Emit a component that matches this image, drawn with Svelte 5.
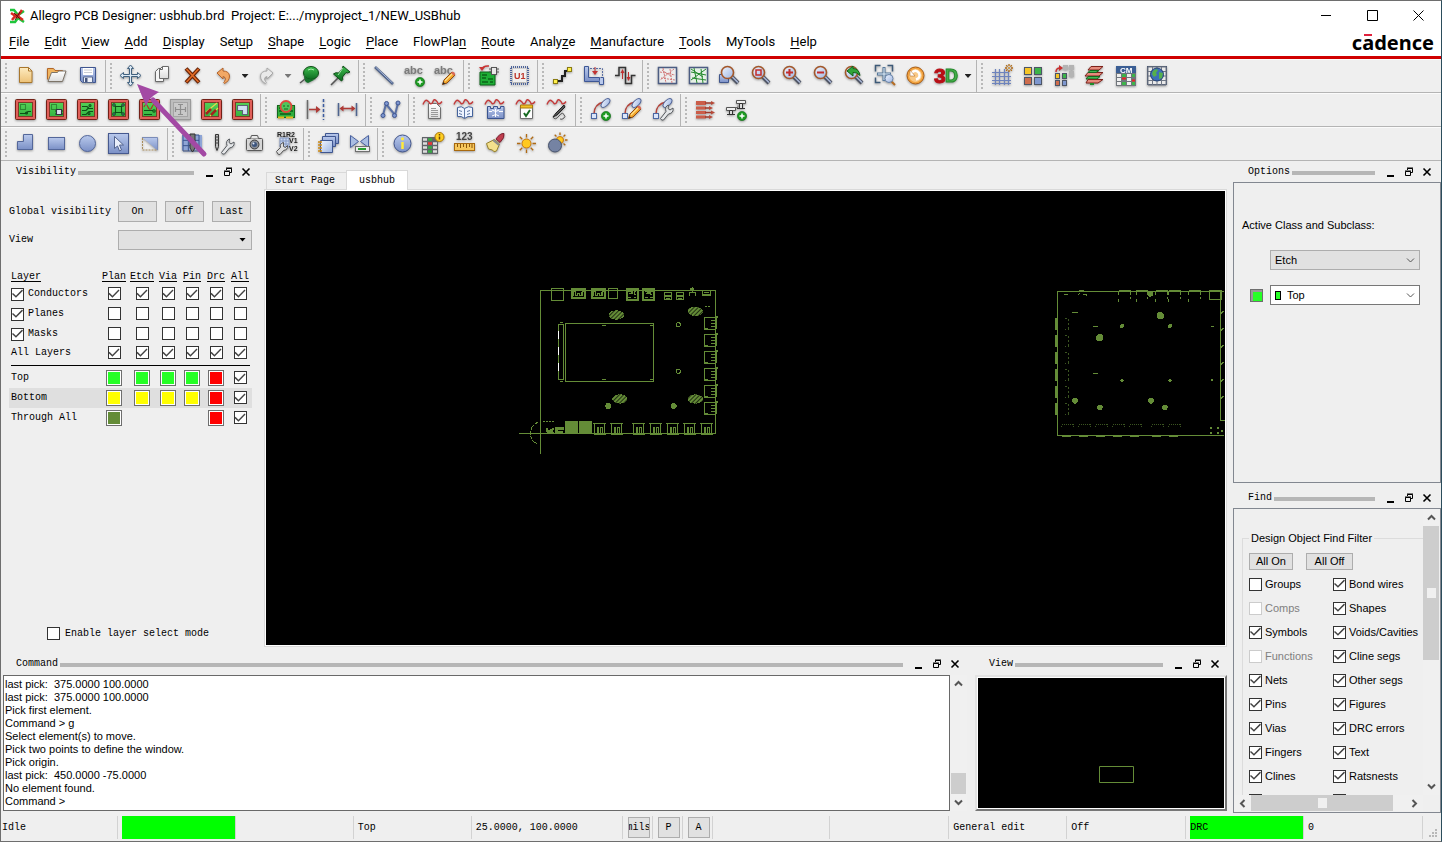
<script lang="ts">
	type Tool = { icon: string; label: string; arrow?: 'on' | 'off' };

	const menus = [
		['', 'F', 'ile'], ['', 'E', 'dit'], ['', 'V', 'iew'], ['', 'A', 'dd'], ['', 'D', 'isplay'],
		['Set', 'u', 'p'], ['', 'S', 'hape'], ['', 'L', 'ogic'], ['', 'P', 'lace'], ['FlowPla', 'n', ''],
		['', 'R', 'oute'], ['Analy', 'z', 'e'], ['', 'M', 'anufacture'], ['', 'T', 'ools'], ['MyTools', '', ''], ['', 'H', 'elp'],
	];

	const badge = '<circle cx="18" cy="19" r="4.6" fill="#1d9a22" stroke="#0c6b12" stroke-width=".6"/><path d="M15.500 19h5M18 16.500v5" stroke="#fff" stroke-width="1.5"/>';
	const pencil = '<path d="M9.500 21.500l1.500-4.500 8-8 3 3-8 8z" fill="#f3a72c" stroke="#8d4a12"/><path d="M12 18l8-8" stroke="#ffe08a" stroke-width="1.200"/><path d="M18 10l1.500-1.500q2 0 2.800 2.800L21 12.700z" fill="#d96a58"/><path d="M9.500 21.500l.8-2.600 1.800 1.800z" fill="#222"/>';
	const wave = '<path d="M2 7.500q2-5 4-4t3 3q2 1 3-2t3-1 2 3q2 1 4-2" fill="none" stroke="#c43b3b" stroke-width="1.400"/>';
	const wrench = '<path d="M10.500 21.500l5.500-7q-1.500-5 2.500-6.500l-.5 3.500 2 1.500 3-2q1 5-4.500 6l-5 6q-2 1-3-1.500z" fill="#e4e6e8" stroke="#55595e"/>';
	const sun = (x: number, y: number, r: number, reach = 5) => {
		let rays = '';
		for (let i = 0; i < 8; i++) {
			const c = Math.cos((i * Math.PI) / 4);
			const s = Math.sin((i * Math.PI) / 4);
			rays += `M${x + c * (r + 1.5)} ${y + s * (r + 1.5)}L${x + c * (r + reach)} ${y + s * (r + reach)}`;
		}
		return `<path d="${rays}" stroke="#b06a14" stroke-width="1.300"/><circle cx="${x}" cy="${y}" r="${r}" fill="#ffc91f" stroke="#c8780f"/>`;
	};
	const board = (inner: string) =>
		`<rect x="2.500" y="2.500" width="20" height="20" rx="1" fill="url(#green)" stroke="#742018"/><rect x="4" y="4" width="17" height="17" fill="none" stroke="#e0605a" stroke-width="2"/><rect x="5.500" y="5.500" width="14" height="14" fill="none" stroke="#7d3a26"/><g fill="none" stroke="#0e4f17" stroke-width="1.100">${inner}</g>`;
	const lens = (inner: string) =>
		`<path d="M14 13l7 7" stroke="#4d5363" stroke-width="4"/><path d="M14.500 13l6.500 6.500" stroke="#a9b7d6" stroke-width="1.500"/><circle cx="10.500" cy="9.500" r="6" fill="url(#glass)" stroke="#a3572a" stroke-width="1.600"/>${inner}`;
	const net = (inner: string) =>
		`<path d="M6 17q0-10 10-12" fill="none" stroke="#b4433b" stroke-width="1.500"/><rect x="3.500" y="16.500" width="5" height="5" fill="#dbe6fa" stroke="#4c68a4"/><ellipse cx="17.500" cy="6" rx="5.500" ry="2.800" transform="rotate(-45 17.500 6)" fill="url(#glass)" stroke="#51659a"/>${inner}`;
	const grid = (x: number, y: number, s: number, n: number, c: string) => {
		let d = '';
		for (let i = 0; i <= n; i++) d += `M${x + (s / n) * i} ${y}v${s}M${x} ${y + (s / n) * i}h${s}`;
		return `<path d="${d}" fill="none" stroke="${c}"/>`;
	};

	const icons: Record<string, string> = {
		new: '<path d="M6.500 4.500h9l3.500 3.500v11.500H6.500z" fill="url(#gold)" stroke="#a9772d"/><path d="M15.500 4.500v3.500H19z" fill="#fff3d4" stroke="#a9772d"/>',
		open: '<path d="M3.500 16.500v-11h6l1.500 2h7.500v4" fill="#f0b560" stroke="#b3672a"/><path d="M4 18.500l3.500-9h6l1-1.500h7.500l-3.500 10.500z" fill="url(#paper)" stroke="#7d7468"/>',
		save: '<path d="M5.500 4.500h15v15h-13l-2-2z" fill="url(#blue)" stroke="#3f5590"/><path d="M8 5h10v7H8z" fill="#fff"/><path d="M9 7h8M9 9.500h8" stroke="#c9ccd4"/><path d="M8.500 14h9v5.500h-9z" fill="#eef1f8" stroke="#55678f"/><path d="M10 15h2.500v4H10z" fill="#45557e"/>',
		move: '<path d="M12.500 2l3 3.500h-2v6h6v-2L23 12.500l-3.500 3v-2h-6v6h2l-3 3.500-3-3.500h2v-6h-6v2L2 12.500l3.500-3v2h6v-6h-2z" fill="#dce9f5" stroke="#41617e"/>',
		copy: '<path d="M6.500 8.500l3-3h5v13h-8z" fill="#f5f5f5" stroke="#6a6a6a"/><path d="M10.500 6.500l3-3h6v12h-9z" fill="url(#paper)" stroke="#6a6a6a"/><path d="M13.500 3.500v3h-3" fill="none" stroke="#6a6a6a"/>',
		delete: '<path d="M6 5.500l13 14M19 5.500l-13 14" stroke="#6b2508" stroke-width="4"/><path d="M6.500 6l12 13M18.500 6l-12 13" stroke="#e36c27" stroke-width="1.600"/>',
		undo: '<path d="M6 10l6-5v3q6 0 6.500 5 0 5-5 7.500-1.500-1 0-2 2-2.500 0-4.500-1-.5-1.500-.5V16z" fill="#f2a865" stroke="#b4632a"/>',
		redo: '<path d="M19 10l-6-5v3q-6 0-6.500 5 0 5 5 7.500 1.500-1 0-2-2-2.500 0-4.500 1-.5 1.500-.5V16z" fill="#e9e9e9" stroke="#a8a8a8"/>',
		unfix: '<ellipse cx="14" cy="10" rx="7.500" ry="6.500" fill="url(#pin)" stroke="#0d4d15"/><path d="M7 13q5 5 12 3l-8 4q-4-1-4-7z" fill="#15702a"/><path d="M8 16l-5 4" stroke="#555" stroke-width="1.500"/><path d="M11 7q3-2 6 0" stroke="#a6ecab" fill="none"/>',
		fix: '<path d="M10 15l-7 7" stroke="#555" stroke-width="1.600"/><path d="M15 3l7 6-2.500 1-1.500-.5-3.500 4.500q1 3-1 4l-8-7q2-2 5-1l4-4z" fill="url(#pin)" stroke="#0d4d15"/><path d="M15 5l-5 7" stroke="#9fe6a4"/>',
		line: '<path d="M4 4l18 17" stroke="#4d6188" stroke-width="2.600"/><path d="M4.500 4l17 16" stroke="#a9b9db"/>',
		text: '<text x="2" y="11" font-size="11" font-weight="700" fill="#7b7b7b">abc</text>' + badge,
		textedit: '<text x="1" y="11" font-size="11" font-weight="700" fill="#7b7b7b">abc</text>' + pencil,
		place: '<path d="M4 9h12l3 3v10H4z" fill="#1fae36" stroke="#0b6419"/><path d="M6 12h5M6 15h4M12 16h5M6 19h6M14 19h3" stroke="#0b6419" stroke-width="1.500"/><rect x="15.500" y="4.500" width="5" height="7" fill="#e8e8e8" stroke="#555"/><path d="M13 6h2M13 9h2M21 6h2M21 9h2" stroke="#555"/><path d="M6 6q1-3.500 7-3" fill="none" stroke="#c83434" stroke-width="1.500"/><path d="M3 4l3 4 3-4z" fill="#c83434"/>',
		chip: '<rect x="4" y="4" width="17" height="17" fill="none" stroke="#4c639b" stroke-width="2" stroke-dasharray="1 1"/><rect x="6" y="6" width="13" height="13" fill="#f0f0f0"/><text x="7" y="16" font-size="9" font-weight="700" fill="#bd3428">U1</text>',
		route: '<path d="M7 18h5v-5h3V8h4" fill="none" stroke="#222" stroke-width="2"/><rect x="3.500" y="16.500" width="4" height="4" fill="#fff04c" stroke="#8a7b13"/><rect x="17.500" y="4.500" width="4" height="4" fill="#fff04c" stroke="#8a7b13"/>',
		slide: '<path d="M3.500 3.500v15h15v-4h-11v-11z" fill="url(#blue)" stroke="#3d5796"/><path d="M9 5.500h12.500v9" fill="none" stroke="#5a6ea3" stroke-dasharray="2 1"/><path d="M19.500 14.500h3v7h-4v-3" fill="#b9c9ec" stroke="#3d5796"/><path d="M14 4v7" stroke="#c23232"/><path d="M11 8l3 4 3-4z" fill="#c23232"/>',
		delay: '<path d="M3 12.500h4v-8h6.500v16h6v-8h4" fill="none" stroke="#333" stroke-width="1.500"/><path d="M10.500 16V8M16.500 9v8" stroke="#c03030"/><path d="M8.500 10l2-4 2 4zM14.500 14l2 4 2-4z" fill="#c03030"/>',
		unrats: '<rect x="3.500" y="4.500" width="18" height="16" fill="#ededed" stroke="#4c5d83" stroke-width="1.500"/><path d="M5 9l15 3M8 5l3 15M19 6l-14 11M15 6l2 14M6 15l14 2M7 7l10 7" stroke="#d27777" stroke-dasharray="2 1"/>',
		rats: '<rect x="3.500" y="4.500" width="18" height="16" fill="#e6f0e6" stroke="#4c5d83" stroke-width="1.500"/><path d="M5 9l15 3M8 5l3 15M20 6l-15 11M15 6l2 14M6 15l14 2M5 6l12 8" stroke="#258a2e"/>',
		zoompoints: '<path d="M2.500 11.500h9v8h-9z" fill="url(#blue)" stroke="#40568c"/>' + lens(''),
		zoomfit: lens('<path d="M8 7h5v5H8z" fill="none" stroke="#c32d2d" stroke-width="1.500"/>'),
		zoomin: lens('<path d="M7 9.500h7M10.500 6v7" stroke="#c32d2d" stroke-width="2"/>'),
		zoomout: lens('<path d="M7 9.500h7" stroke="#c32d2d" stroke-width="2"/>'),
		zoomprev: lens('<path d="M6 8l6-5v2.500q6 0 7 7-3-3.500-7-3V13z" fill="#31a53a" stroke="#126119"/>'),
		zoomsel: '<path d="M3.500 8.500v-6h5M15.500 2.500h5v6M3.500 14.500v5h5" fill="none" stroke="#3d5a78" stroke-width="1.500"/><path d="M12 4v14M5 11h14" stroke="#56799b" stroke-width="3"/><path d="M12 5v12M6 11h12" stroke="#e5f0fa"/><path d="M19 18l4 4" stroke="#b56b22" stroke-width="2"/><circle cx="17" cy="15.500" r="4" fill="url(#glass)" stroke="#6883a8"/>',
		refresh: '<circle cx="12.500" cy="12.500" r="8.500" fill="#f2a23d" stroke="#a85d16"/><circle cx="12.500" cy="12.500" r="6.500" fill="#f9c987"/><path d="M8.500 10q4-4.500 7.500 0 2 5-3 6.500" fill="none" stroke="#fff" stroke-width="2.500"/><path d="M7 7v6h5z" fill="#fff" stroke="#a85d16" stroke-width=".5"/>',
		three: '<text x="0" y="20" font-size="21" font-weight="900" fill="#b80f16" stroke="#b80f16">3</text><text x="11" y="19" font-size="18" font-weight="900" fill="#45ae4b" stroke="#258b2c">D</text>',
		grid: '<path d="M6.500 6v16M10.500 6v16M15.500 6v16M19.500 8v14M3 9.500h17M3 13.500h19M3 17.500h19M3 20.500h19" stroke="#6d83bd" stroke-width="1.200" fill="none"/>' + sun(20, 5, 0.5, 3.5),
		color: '<rect x="4.500" y="4.500" width="7" height="7" fill="#f6c526" stroke="#4d5566"/><rect x="14.500" y="4.500" width="7" height="7" fill="#3db44a" stroke="#4d5566"/><rect x="4.500" y="14.500" width="7" height="7" fill="#cf6d4d" stroke="#4d5566"/><rect x="14.500" y="14.500" width="7" height="7" fill="#7e97cf" stroke="#4d5566"/>',
		colorswap: '<path d="M12 2h5v5h-5zM18 2h5v5h-5zM18 8h5v6h-5z" fill="#b4b4b4"/><rect x="4.500" y="10.500" width="4" height="5" fill="#f6c526" stroke="#4d5566"/><rect x="11.500" y="10.500" width="4" height="5" fill="#3db44a" stroke="#4d5566"/><rect x="4.500" y="17.500" width="4" height="5" fill="#cf6d4d" stroke="#4d5566"/><rect x="11.500" y="17.500" width="4" height="5" fill="#7e97cf" stroke="#4d5566"/><path d="M5 9q0-4 4-4" fill="none" stroke="#c83030" stroke-width="1.500"/><path d="M8 2l4 3-4 3z" fill="#c83030"/>',
		stack: '<path d="M9 3.500h12l-4 3.500H6zM6 9.500h15l-4 3.500H3z" fill="#e58a7c" stroke="#7d221b"/><path d="M8 7.500h9l-3 2H6zM6 13.500h12l-3 2.500H4z" fill="#42b651" stroke="#17641f"/><path d="M6 16.500h15l-5 3.500H4z" fill="#e58a7c" stroke="#7d221b"/><path d="M8 20h4v2H8z" fill="#1d8c2c"/>',
		cm: '<rect x="3" y="3" width="20" height="20" fill="#70757b"/><rect x="3" y="3" width="20" height="7" fill="#3b5e94"/><text x="7" y="9.500" font-size="8" font-weight="700" fill="#fff">CM</text><path d="M4 12.500h4M4 16.500h4M4 20.500h4M14 12.500h4M14 16.500h4M14 20.500h4" stroke="#eee" stroke-width="3"/><path d="M9 12.500h4M9 20.500h4M19 12.500h3M19 20.500h3" stroke="#3db44a" stroke-width="3"/><path d="M9 15.500h4M19 17.500h3" stroke="#ea2424" stroke-width="2"/>',
		world: '<rect x="3.500" y="3.500" width="19" height="18" fill="#e9e9e9" stroke="#4c5870"/>' + grid(4, 4, 18, 4, '#6f7785') + '<circle cx="13" cy="11.500" r="6.500" fill="#3c6fb8" stroke="#23406f"/><path d="M9 8q3-3 5-1l-2 3 1 2-3 2-2-3zM15 9l4 1-1 5-3 1z" fill="#56b04c"/>',

		b1: board('<path d="M7.500 7.500h5v5h-5z" stroke-dasharray="1 1"/><path d="M7 16.500h6l2-2h3"/><circle cx="13.500" cy="16" r="1"/>'),
		b2: board('<path d="M7.500 7.500h5v5h-5z" stroke-dasharray="1 1"/><path d="M12.500 12.500h5v5h-5z" fill="#dce0ee" stroke="#334"/><path d="M11 14h1M11 17h1M18 14h1M18 17h1"/>'),
		b3: board('<path d="M7 9.500h5l2 2h4M7 13.500h4l3-3M7 17.500h4l3-3h4"/><circle cx="15" cy="8.500" r="1"/><circle cx="14" cy="16.500" r="1"/>'),
		b4: board('<path d="M9.500 9.500h6v6h-6zM7 7l3 3M18 7l-3 3M7 18l3-3M18 18l-3-3"/><circle cx="8" cy="8" r="1.200" fill="#6b8fbd"/><circle cx="17" cy="8" r="1.200" fill="#6b8fbd"/><circle cx="8" cy="17" r="1.200" fill="#6b8fbd"/><circle cx="17" cy="17" r="1.200" fill="#6b8fbd"/>'),
		b5: board('<path d="M7 10q2-5 4 0t4 0 4 0" stroke="#b42a22"/><path d="M7 13.500h9M7 17.500h8"/><circle cx="17" cy="14" r="1.200"/>'),
		b6: '<rect x="2.500" y="2.500" width="20" height="20" fill="#bdbdbd" stroke="#9a9a9a"/><rect x="5.500" y="5.500" width="14" height="14" fill="#c9c9c9" stroke="#a5a5a5"/><path d="M12.500 7v11M8 12.500h9M10 7.500h5M10 17.500h5M7.500 10v5M17.500 10v5" stroke="#8e8e8e" stroke-width="1.200"/>',
		b7: board('<path d="M7 15l11-9M11 19l8-8" stroke="#e6d84a"/><path d="M7 17l5-5M12 18l5-5" stroke="#a2251c" stroke-width="2.600"/>'),
		b8: board('<path d="M7.500 8.500h10v9h-5v-4h-5z" fill="#cfe0f2" stroke="#5b6577"/>'),
		inspect: '<rect x="4.500" y="8.500" width="17" height="12" fill="#2fae3d" stroke="#126a1d"/><path d="M6 11h2M6 14h3M17 14h3M17 11h2M7 17h11" stroke="#0f5c19" stroke-width="1.500"/><path d="M5 20.500h6M13 20.500h7" stroke="#e4b71c" stroke-width="2"/><circle cx="13" cy="9.500" r="5.500" fill="#53c45c" stroke="#e2483d" stroke-width="1.800"/><path d="M10 9h2M14 9h2M11 12h4" stroke="#126a1d"/>',
		toline: '<path d="M3.500 3v19" stroke="#6a6a6a" stroke-width="1.500"/><path d="M19.500 2v21" stroke="#3c5ca0" stroke-width="1.500" stroke-dasharray="3 2"/><path d="M5 12.500h8" stroke="#b03a36" stroke-width="1.500"/><path d="M12 9l4.500 3.500L12 16z" fill="#b03a36"/>',
		dim: '<path d="M3.500 6v13M21.500 6v13" stroke="#4e648f" stroke-width="1.500"/><path d="M6 11.500h13" stroke="#b03a36" stroke-width="1.500"/><path d="M8.500 8.500L4.500 11.500l4 3zM16.500 8.500l4 3-4 3z" fill="#b03a36"/>',
		poly: '<path d="M5 18L8 7l9 11 3-12" fill="none" stroke="#5a70a4" stroke-width="2"/><g fill="#7d96cf" stroke="#3e5591"><circle cx="5" cy="18.500" r="2"/><circle cx="8.500" cy="6.500" r="2"/><circle cx="16.500" cy="18.500" r="2"/><circle cx="20" cy="6" r="2"/></g>',
		report: '<path d="M7.500 6.500h8l4 4v11h-12z" fill="url(#paper)" stroke="#6f6f6f"/><path d="M10 11.500h5M10 13.500h7M10 15.500h7M10 17.500h7M10 19.500h7" stroke="#9a9a9a"/>' + wave,
		book: '<path d="M5.500 10.500q4-2 7 1 4-3 8-1v9q-5-1-8 2-3-3-7-2z" fill="#eef4ff" stroke="#44639c"/><path d="M12.500 11.500v10M7 13.500l3 1M7 16.500l3 1M15 14.500l3-1M15 17.500l3-1" stroke="#5f78a6"/>' + wave,
		castle: '<path d="M4.500 9.500h3v2h3v-2h4v2h3v-2h3.500v12H4.500z" fill="url(#blue)" stroke="#3a548f"/><path d="M6 14.500h3M16 14.500h4M9 13q4 3 7 0M9 19q4-3 7 0M12.500 12v8" fill="none" stroke="#fff"/>' + wave,
		check: '<path d="M6.500 10.500h12v11h-12z" fill="#fff" stroke="#6f6f6f"/><path d="M6.500 8h12v3h-12z" fill="#f1c028" stroke="#a87a0c"/><path d="M10 16l2 3 4-6" fill="none" stroke="#176b22" stroke-width="2"/>' + wave,
		probe: '<path d="M19 8l-8 8-3 4 4-2 8-8z" fill="#555" stroke="#222"/><path d="M8 20q2 4 6-1t5-1q2 1 0 3t-4 1" fill="none" stroke="#555"/>' + wave,
		netadd: net(badge),
		netedit: net(pencil),
		nettool: net(wrench),
		align: '<path d="M3 4h10v4H3zM3 9.500h10v3H3zM3 14h10v3H3zM3 18.500h10v3H3z" fill="#cb5d49"/><path d="M12 6h7M12 11h5M12 15.500h7M12 20h5" stroke="#9c3a2b" stroke-width="1.500"/><path d="M18 4l4 2-4 2zM16 9l4 2-4 2zM18 13.500l4 2-4 2zM16 18l4 2-4 2z" fill="#b74a39"/>',
		pads: '<path d="M11 10.500h3v-2" fill="none" stroke="#666"/><path d="M12.500 3.500h9v3h-9zM2.500 10.500h9v3h-9z" fill="#eee" stroke="#555"/><path d="M15.500 6.500h3v5h-3zM5.500 13.500h3v4h-3z" fill="#ddd" stroke="#333"/><path d="M13 11.500h8M3 17.500h8" stroke="#333" stroke-width="1.200"/>' + badge,

		shape: '<path d="M10.500 3.500h9v15h-15v-8h6z" fill="url(#blue)" stroke="#54679a"/>',
		rect: '<rect x="4.500" y="6.500" width="16" height="12" fill="url(#blue)" stroke="#54679a"/>',
		circle: '<circle cx="12.500" cy="12.500" r="8" fill="url(#blue)" stroke="#54679a"/>',
		pick: '<rect x="2.500" y="2.500" width="20" height="20" fill="url(#blue)" stroke="#46598f"/><path d="M8.500 5.500v12l3-2.500 2 5 2-1-2-5h4z" fill="#e9eefa" stroke="#53648f"/>',
		cut: '<path d="M5 6.500h15.500v13L6 7" fill="url(#blue)"/><path d="M5 6.500h15.500v12.500" stroke="#7b8cb8" fill="none"/><path d="M5.500 7v12h14" fill="none" stroke="#a98c5a" stroke-dasharray="2 1"/>',
		gridtool: '<rect x="2" y="4" width="20" height="15" fill="#8ea5d6"/>' + grid(3, 4, 16, 3, '#3b558e') + '<path d="M10 3h5v14l-2.500 4-2.500-4z" fill="#777" stroke="#333"/>',
		drill: '<path d="M4.500 3.500h3v12l-1.500 4-1.500-4z" fill="#bbb" stroke="#333"/><path d="M4 6h4M4 9h4M4 12h4" stroke="#444"/>' + wrench,
		camera: '<rect x="4.500" y="7.500" width="16" height="12" rx="1" fill="#d6d6d6" stroke="#5a5a5a"/><path d="M8.500 7.500l1-3h6l1 3" fill="#e9e9e9" stroke="#5a5a5a"/><circle cx="12.500" cy="13.500" r="4.500" fill="#8b8f96" stroke="#3c3c3c"/><circle cx="12.500" cy="13.500" r="2.500" fill="#3e567e"/><circle cx="11.500" cy="12.500" r="1" fill="#dfe9f7"/>',
		refdes: '<rect x="7" y="7" width="9" height="10" fill="#c9d6ee"/>' + grid(7, 7, 9, 3, '#8499c4') + '<text x="4" y="6" font-size="7" font-weight="700" fill="#222">R1R2</text><text x="16" y="12" font-size="7" font-weight="700" fill="#222">V1</text><text x="16" y="20" font-size="7" font-weight="700" fill="#222">V2</text><path d="M3.500 20.500l4-4q-1-4 3-5v4l2 1 2-2q1 4-4 5l-3.500 4q-2 1-3.500-3z" fill="#dedede" stroke="#555"/>',
		cascade: '<path d="M9.500 2.500h13v10h-13z" fill="url(#blue)" stroke="#3f5690"/><path d="M6.500 5.500h13v10h-13z" fill="url(#blue)" stroke="#3f5690"/><path d="M4.500 9.500h12v12h-12z" fill="url(#glass)" stroke="#3f5690"/><path d="M2 11h4M2 14h4M2 17h4M2 20h4" stroke="#cf8c14" stroke-width="1.500"/>',
		flip: '<path d="M3.500 4.500l8 6-8 6zM21.500 4.500l-8 6 8 6z" fill="#a9bde2" stroke="#4a62a0"/><rect x="8.500" y="15.500" width="14" height="5" fill="#eee" stroke="#6f6f6f"/><path d="M11 18h8" stroke="#27a032" stroke-width="2"/>',
		info: '<circle cx="12.500" cy="12.500" r="8.500" fill="url(#blue)" stroke="#41558c"/><path d="M12.500 11v7" stroke="#ffea3c" stroke-width="2.500"/><circle cx="12.500" cy="7.800" r="1.600" fill="#ffea3c"/>',
		xsection: '<rect x="1" y="6" width="16" height="17" fill="#606468"/><path d="M2 8.500h4M2 12.500h4M2 16.500h4M2 20.500h4M12 12.500h4M12 16.500h4M12 20.500h4" stroke="#ddd" stroke-width="2.500"/><path d="M7 8.500h4M7 16.500h4M7 20.500h4" stroke="#36aa42" stroke-width="2.500"/><path d="M7 12.500h4" stroke="#e33" stroke-width="2.500"/><circle cx="18.500" cy="6" r="4.500" fill="#ffce21" stroke="#a8740d"/><path d="M18.500 5.500v3M18.500 3v1.500" stroke="#6b4707" stroke-width="1.500"/>',
		ruler: '<text x="4" y="9" font-size="10" font-weight="700" fill="#444">123</text><rect x="2.500" y="12.500" width="20" height="7" fill="#f6c75c" stroke="#a8690f"/><path d="M5.500 13v3M8.500 13v4M11.500 13v3M14.500 13v4M17.500 13v3M20 13v4" stroke="#8c560c"/>',
		clean: '<path d="M13 8q4-6 8-5.500 1 4-4 9z" fill="#c03e4e" stroke="#7c2030"/><path d="M3.500 12.500l8-4 5 4.500-3 7q-3 2-4-1l-4-1z" fill="#f4e08c" stroke="#95802c"/><path d="M10 9l6 5" stroke="#8c8c8c" stroke-width="2"/>',
		sun: sun(12.5, 12.5, 4.5),
		shade: sun(15, 9, 3.5, 4) + '<circle cx="10" cy="14.500" r="6.500" fill="#7583a3" stroke="#46526d"/>',
	};

	const t = (s: string): Tool[] =>
		s.split(' ').map((name) => {
			const [icon, arrow] = name.split(':');
			return { icon, label: icon, arrow: arrow as Tool['arrow'] };
		});

	const toolRows: Tool[][][] = [
		[
			t('new open save'),
			t('move copy delete undo:on redo:off unfix fix'),
			t('line text textedit'),
			t('place chip'),
			t('route slide delay'),
			t('unrats rats zoompoints zoomfit zoomin zoomout zoomprev zoomsel refresh three:on'),
			t('grid color colorswap stack cm world'),
		],
		[
			t('b1 b2 b3 b4 b5 b6 b7 b8'),
			t('inspect toline dim'),
			t('poly'),
			t('report book castle check probe'),
			t('netadd netedit nettool'),
			t('align pads'),
		],
		[
			t('shape rect circle pick cut'),
			t('gridtool drill camera refdes'),
			t('cascade flip'),
			t('info xsection ruler clean sun shade'),
		],
	];

	const columns = ['Plan', 'Etch', 'Via', 'Pin', 'Drc', 'All'];
	const classes = [
		{ name: 'Conductors', own: true, on: true },
		{ name: 'Planes', own: true, on: false },
		{ name: 'Masks', own: true, on: false },
		{ name: 'All Layers', own: false, on: true },
	];
	const layers = [
		{ name: 'Top', swatches: ['green', 'green', 'green', 'green', 'red'] },
		{ name: 'Bottom', swatches: ['yellow', 'yellow', 'yellow', 'yellow', 'red'] },
		{ name: 'Through All', swatches: ['olive', '', '', '', 'red'] },
	];

	const findLeft = [
		{ name: 'Groups', on: false },
		{ name: 'Comps', on: false, disabled: true },
		{ name: 'Symbols', on: true },
		{ name: 'Functions', on: false, disabled: true },
		{ name: 'Nets', on: true },
		{ name: 'Pins', on: true },
		{ name: 'Vias', on: true },
		{ name: 'Fingers', on: true },
		{ name: 'Clines', on: true },
	];
	const findRight = ['Bond wires', 'Shapes', 'Voids/Cavities', 'Cline segs', 'Other segs', 'Figures', 'DRC errors', 'Text', 'Ratsnests'];

	const log = `last pick:  375.0000 100.0000
last pick:  375.0000 100.0000
Pick first element.
Command > g
Select element(s) to move.
Pick two points to define the window.
Pick origin.
last pick:  450.0000 -75.0000
No element found.
Command >`;

	// board artwork, three drawing units to a screen pixel
	const sideConnectors = [110, 161, 212, 263, 314, 365];
	const bottomConnectors = [249, 300, 366, 417, 468, 519, 570];
	const ovals = [[319, 105], [556, 94], [330, 357], [556, 357]];
	const mirrorEdge = [131, 182, 233, 284, 335, 386];
	const mirrorBottom = [63, 114, 165, 216, 267, 333, 384];
	const mirrorTop = [236, 288, 347, 386, 446];
	const dots = [[361, 107, 11], [179, 173, 11], [246, 138, 6], [390, 138, 6], [246, 302, 5], [390, 302, 5], [105, 362, 9], [180, 382, 8], [333, 362, 9], [375, 382, 8], [331, 42, 8]];
</script>

{#snippet dockHeader(title: string)}
	<header class="dock-header">
		<h2>{title}</h2>
		<span class="dock-bar"></span>
		<button aria-label="Minimize {title}"><svg width="10" height="10"><path d="M1 9h7" stroke-width="2" /></svg></button>
		<button aria-label="Float {title}"><svg width="10" height="10"><path d="M3.500 3V1.500h5v4H7M3 1h6M1.500 4.500h5v4h-5zM1 4h6" /></svg></button>
		<button aria-label="Close {title}"><svg width="10" height="10"><path d="M1.500 1.500l7 7M8.500 1.500l-7 7" stroke-width="1.600" /></svg></button>
	</header>
{/snippet}

{#snippet chevron(dir: string)}
	<svg class="chev {dir}" width="9" height="9" viewBox="0 0 9 9"><path d="M1 6.500l3.500-3.500 3.500 3.500" /></svg>
{/snippet}

<svg class="defs" width="0" height="0" aria-hidden="true">
	<defs>
		<linearGradient id="blue" x2="0" y2="1"><stop stop-color="#b9c9ec" /><stop offset="1" stop-color="#7b90c6" /></linearGradient>
		<linearGradient id="glass" x2="1" y2="1"><stop stop-color="#f1f6ff" /><stop offset="1" stop-color="#9db5e2" /></linearGradient>
		<linearGradient id="green" x2="0" y2="1"><stop stop-color="#5ad65c" /><stop offset="1" stop-color="#2fae3d" /></linearGradient>
		<linearGradient id="pin" x2="0" y2="1"><stop stop-color="#3fc04f" /><stop offset="1" stop-color="#0c6a20" /></linearGradient>
		<linearGradient id="gold" x2="0" y2="1"><stop stop-color="#fdebc0" /><stop offset="1" stop-color="#edc278" /></linearGradient>
		<linearGradient id="paper" x2="0" y2="1"><stop stop-color="#ffffff" /><stop offset="1" stop-color="#dcdcdc" /></linearGradient>
		<pattern id="hatch" width="9" height="9" patternUnits="userSpaceOnUse" patternTransform="rotate(45)"><path d="M0 0h7v9h-7z" fill="#648c37" /></pattern>
	</defs>
</svg>

<div class="window">
	<div class="titlebar">
		<svg class="app-icon" width="16" height="16" viewBox="0 0 16 16">
			<path d="M1 2h4l4 5 6-4M1 14h5l3-4 6 4" fill="none" stroke="#1fc53c" stroke-width="2.500" />
			<path d="M2 5l6 4 5-7M3 12l4-5 7 5" fill="none" stroke="#d8281e" stroke-width="2.500" />
			<path d="M5 5l6 6M11 4l-5 8" stroke="#5d1712" />
		</svg>
		<h1>Allegro PCB Designer: usbhub.brd&nbsp; Project: E:.../myproject_1/NEW_USBhub</h1>
		<button aria-label="Minimize"><svg width="11" height="11"><path d="M0 5.500h10" /></svg></button>
		<button aria-label="Maximize"><svg width="11" height="11"><path d="M.5.500h10v10h-10z" /></svg></button>
		<button aria-label="Close"><svg width="11" height="11"><path d="M.5.500l10 10M10.500.500l-10 10" /></svg></button>
	</div>

	<nav class="menubar">
		{#each menus as [pre, key, post]}
			<button>{pre}<u>{key}</u>{post}</button>
		{/each}
		<span class="brand">c<span class="macron">a</span>dence</span>
	</nav>

	{#each toolRows as row}
		<div class="tool-row">
			{#each row as group}
				<div class="tool-group">
					<span class="grip"></span>
					{#each group as tool}
						<button class="tool" aria-label={tool.label}>
							<svg class="icon" width="25" height="25" viewBox="0 0 25 25">{@html icons[tool.icon]}</svg>
						</button>
						{#if tool.arrow}
							<button class="drop {tool.arrow}" aria-label="{tool.label} list"></button>
						{/if}
					{/each}
				</div>
			{/each}
		</div>
	{/each}

	<div class="main">
		<div class="work">
			<div class="upper">
				<section class="visibility">
					{@render dockHeader('Visibility')}
					<div class="vis-body">
						<div class="vis-line">
							<span>Global visibility</span>
							<button class="push">On</button>
							<button class="push">Off</button>
							<button class="push">Last</button>
						</div>
						<div class="vis-line">
							<label for="view">View</label>
							<span class="view-select"><select id="view"><option></option></select></span>
						</div>
						<table>
							<thead>
								<tr>
									<th class="name">Layer</th>
									{#each columns as col}<th class={col.length > 3 ? 'wide' : ''}>{col}</th>{/each}
								</tr>
							</thead>
							<tbody>
								{#each classes as row}
									<tr class:short={!row.own}>
										<td class="name">
											{#if row.own}
												<label><input type="checkbox" checked />{row.name}</label>
											{:else}
												{row.name}
											{/if}
										</td>
										{#each columns as col}
											<td><input type="checkbox" aria-label="{row.name} {col}" checked={row.on} /></td>
										{/each}
									</tr>
								{/each}
								<tr class="rule"><td colspan="7"><hr /></td></tr>
								{#each layers as layer, i}
									<tr class:current={i === 1}>
										<td class="name">{layer.name}</td>
										{#each layer.swatches as color, j}
											<td>{#if color}<button class="swatch {color}" aria-label="{layer.name} {columns[j]} color"></button>{/if}</td>
										{/each}
										<td><input type="checkbox" aria-label="{layer.name} All" checked /></td>
									</tr>
								{/each}
							</tbody>
						</table>
						<label class="select-mode"><input type="checkbox" />Enable layer select mode</label>
					</div>
				</section>

				<section class="editor">
					<div class="tabs">
						<button>Start Page</button>
						<button class="active">usbhub</button>
					</div>
					<div class="frame">
						<svg class="board" role="img" aria-label="usbhub board">
							<g transform="translate(244 89) scale(.33333333)">
								<path d="M91.500 30v492M27 460.500h591M90 31.500h528M616.500 30v432" />
								<path d="M166.500 130.500h264v174h-264zM145.500 133.500h15v165h-15zM276 136h12M420 136h10M276 297h12M420 297h10M150 128h10M150 303h10" />
								<path class="white" d="M145.500 153v24M145.500 201v24M145.500 249v24" />
								<path d="M84 427q-22 8-22 34t22 30" stroke-dasharray="9 3" />
								<path d="M124.500 25.500h36v36h-36zM295.500 25.500h27v30h-27z" />
								<path d="M99 424.500h33M585 79.500h15" stroke-dasharray="6 3" />
								{#each [183, 243] as x}
									<path class="thick" d="M{x} 27h45M{x + 3} 27v27h39v-27" />
									<path d="M{x + 8} 47v-12h4v10h6v-6h6v6h6v-9h5v12M{x + 4} 34h8M{x + 32} 34h8" />
								{/each}
								{#each [347, 397] as x}
									<path class="thick" d="M{x} 27h39M{x + 3} 27v33h33v-33M{x + 20} 34v8" />
									<path d="M{x + 8} 35h8v6h-6M{x + 31} 35h-6v9h5M{x + 8} 52h8M{x + 24} 52h8" />
								{/each}
								{#each [462, 498] as x}
									<path d="M{x} 36h22v10h-22zM{x + 2} 49h20v9h-20zM{x + 5} 54h14" />
								{/each}
								<path d="M537 49v-13h18v13M541 25h9M546 22v16M576 33v12h24v-12M582 38h14" />
								<path class="thick" d="M540 26h12M578 46h22" />
								{#each ovals as [x, y]}
									<ellipse class="hatch" cx={x} cy={y} rx="23" ry="14" />
								{/each}
								{#each sideConnectors as y}
									<path d="M583.500 {y + 3}h33v34h-33zM604 {y + 10}h12M604 {y + 20}h12M604 {y + 29}h12" />
									<path class="thick" d="M616 {y}h8M619 {y}v36M585 {y + 38}h10" />
								{/each}
								{#each bottomConnectors as x}
									<path d="M{x} 430.500h39M{x + 4} 430v32M{x + 34} 430v32M{x + 12} 458v-15h4v15M{x + 23} 458v-15h4v15" />
									<path class="thick" d="M{x + 3} 462h35" />
								{/each}
								<path class="solid" d="M165 422h39v38h-39zM207 422h38v38h-38zM135 441h27v9h-18v12h-9zM108 444h6v6h6v-3h6v-3h6v6h-3v6h3v6h-21v-6h-3zM141 453h18v9h-18z" />
								<circle cx="505" cy="134" r="6" /><circle cx="505" cy="274" r="6" />
								<circle class="solid" cx="295" cy="378" r="9" /><circle class="solid" cx="491" cy="378" r="9" />
							</g>
							<g transform="translate(774 89) scale(.33333333)">
								<path d="M52.500 33v433.500h500M51 34.500h501M541.500 34v387h12M508.500 31.500h36v27h-36zM510 57h36" />
								{#each mirrorEdge as y}
									<path class="thick" d="M49 {y - 18}v36" />
									<path class="dim" d="M76 {y - 16}h9v32h-9" stroke-dasharray="6 6" />
									<path d="M542 {y - 30}l9-8" />
								{/each}
								{#each mirrorBottom as x}
									<path class="dim" d="M{x} 442v-8h36v8" stroke-dasharray="3 3" />
									<path class="thick" d="M{x + 3} 467h27" />
								{/each}
								{#each mirrorTop as x}
									<path class="thick" d="M{x} 32h36" />
									<path d="M{x} 36v8M{x + 34} 36v8M{x} 57v8M{x + 34} 50v8" />
								{/each}
								{#each dots as [x, y, r]}
									<circle class="solid" cx={x} cy={y} r={r} />
								{/each}
								<path d="M96 97.500h18M159 139.500h15M159 280.500h15M513 139.500h10M72 42h12M116 30h16M114 45l6-6M130 42h8v6" />
								<path class="solid" d="M513 297h6v6h-6zM510 441h6v6h-6zM531 441h6v6h-6zM510 457h6v6h-6zM531 457h6v6h-6zM543 450h6v6h-6z" />
							</g>
						</svg>
					</div>
				</section>
			</div>

			<div class="lower">
				<section class="command">
					{@render dockHeader('Command')}
					<div class="console">
						<textarea aria-label="Command" spellcheck="false" readonly value={log}></textarea>
						<div class="scroll vertical">
							<button aria-label="Scroll up">{@render chevron('up')}</button>
							<span class="track"><span class="thumb log-thumb"></span></span>
							<button aria-label="Scroll down">{@render chevron('down')}</button>
						</div>
					</div>
				</section>
				<section class="view">
					{@render dockHeader('View')}
					<div class="overview">
						<svg width="100%" height="100%"><path d="M121.500 88.500h34v16h-34z" fill="none" stroke="#648c37" /></svg>
					</div>
				</section>
			</div>
		</div>

		<aside>
			<section class="options">
				{@render dockHeader('Options')}
				<div class="panel options-body">
					<p>Active Class and Subclass:</p>
					<span class="combo class-combo">
						<select aria-label="Class"><option>Etch</option></select>{@render chevron('down')}
					</span>
					<div class="subclass">
						<button class="swatch green" aria-label="Subclass color"></button>
						<span class="combo top-combo">
							<i></i><select aria-label="Subclass"><option>Top</option></select>{@render chevron('down')}
						</span>
					</div>
				</div>
			</section>

			<section class="find">
				{@render dockHeader('Find')}
				<div class="panel find-body">
					<div class="find-scroll">
						<fieldset>
							<legend>Design Object Find Filter</legend>
							<div class="find-buttons">
								<button class="push">All On</button>
								<button class="push">All Off</button>
							</div>
							<div class="find-grid">
								{#each findLeft as item, i}
									<label class:disabled={item.disabled}><input type="checkbox" checked={item.on} disabled={item.disabled} />{item.name}</label>
									<label><input type="checkbox" checked />{findRight[i]}</label>
								{/each}
								<label><input type="checkbox" aria-label="Lines" checked /></label>
								<label><input type="checkbox" aria-label="Rat Ts" checked /></label>
							</div>
						</fieldset>
					</div>
					<div class="scroll vertical">
						<button aria-label="Scroll up">{@render chevron('up')}</button>
						<span class="track"><span class="thumb find-v"></span></span>
						<button aria-label="Scroll down">{@render chevron('down')}</button>
					</div>
					<div class="scroll horizontal">
						<button aria-label="Scroll left">{@render chevron('left')}</button>
						<span class="track"><span class="thumb find-h"></span></span>
						<button aria-label="Scroll right">{@render chevron('right')}</button>
					</div>
				</div>
			</section>
		</aside>
	</div>

	<footer>
		<span>Idle</span>
		<span class="lit"></span>
		<span></span>
		<span>Top</span>
		<span>25.0000, 100.0000</span>
		<span class="key"><button class="push"><b>mils</b></button></span>
		<span class="key"><button class="push">P</button></span>
		<span class="key"><button class="push">A</button></span>
		<span></span>
		<span></span>
		<span>General edit</span>
		<span>Off</span>
		<span class="lit">DRC</span>
		<span>0</span>
		<svg class="size-grip" width="10" height="10"><path d="M7 0h2v2h-2zM4 3h2v2h-2zM7 3h2v2h-2zM1 6h2v2h-2zM4 6h2v2h-2zM7 6h2v2h-2z" fill="#b8b8b8" /></svg>
	</footer>

	<svg class="pointer" width="80" height="84" viewBox="0 0 80 84"><path d="M22 23L73 77" stroke="#a349a4" stroke-width="5" stroke-linecap="round" /><path d="M6 7l22 8-6 4-4 4-3 6z" fill="#a349a4" /></svg>
</div>

<style>
	:global(body) {
		background: #efefef;
	}

	.window {
		--mono: "Liberation Mono", monospace;
		--sans: "Liberation Sans", Arial, sans-serif;
		--title: Roboto, "Noto Sans", sans-serif;
		position: relative;
		box-sizing: border-box;
		height: 100vh;
		display: flex;
		flex-direction: column;
		border: 1px solid #6e6e6e;
		border-right-color: #2b4d5c;
		background: #efefef;
		color: #000;
		font: 10px/12px var(--mono);
		overflow: hidden;
	}

	.window *, .window *::before, .window *::after { box-sizing: border-box; }

	button, select, textarea {
		font: inherit;
		color: inherit;
		margin: 0;
		padding: 0;
		border: 0;
		background: none;
		border-radius: 0;
	}

	.defs { position: absolute; }

	/* title and menus */
	.titlebar {
		display: flex;
		align-items: center;
		height: 29px;
		padding-left: 8px;
		background: #fff;
	}

	.titlebar h1 {
		flex: 1;
		margin: 0 0 0 5px;
		font: 13px/16px var(--title);
		white-space: nowrap;
	}

	.titlebar button { width: 46px; height: 29px; }
	.titlebar button svg { display: block; margin: auto; fill: none; stroke: #000; }

	.menubar {
		display: flex;
		align-items: center;
		height: 29px;
		padding: 0 0 2px 8px;
		gap: 15px;
		background: #fff;
		border-bottom: 3px solid #d00000;
		font: 13px/16px var(--title);
	}

	.menubar u { text-underline-offset: 2px; }

	.brand {
		margin-left: auto;
		padding: 2px 7px 0 0;
		font: 700 20px/20px "Noto Sans", sans-serif;
	}

	.macron { position: relative; }

	.macron::before {
		content: '';
		position: absolute;
		top: 5px;
		left: 2px;
		width: 8px;
		height: 2px;
		background: #e0203c;
	}

	/* toolbars */
	.tool-row {
		display: flex;
		flex: none;
		height: 34px;
		border-top: 1px solid #fbfbfb;
		border-bottom: 1px solid #b4b4b4;
	}

	.tool-group {
		display: flex;
		align-items: center;
		padding-right: 2px;
		border-right: 1px solid #b4b4b4;
	}

	.tool-group:last-child { border-right: 0; }

	.grip {
		width: 2px;
		height: 26px;
		margin: 0 3px 0 4px;
		background: repeating-linear-gradient(#b9b9b9 0 2px, transparent 2px 4px);
	}

	.tool { width: 31px; height: 31px; margin-bottom: 1px; }

	.icon {
		display: block;
		margin: 3px;
		font-family: var(--sans);
		filter: drop-shadow(0 1px 1px rgba(0, 0, 0, 0.35));
	}

	.drop { width: 12px; height: 31px; }

	.drop::before {
		content: '';
		display: block;
		width: 7px;
		height: 4px;
		margin: auto;
		background: #222;
		clip-path: polygon(0 0, 100% 0, 50% 100%);
	}

	.drop.off::before { background: #777; }

	/* docks */
	.main { flex: 1; display: flex; min-height: 0; }
	.work { flex: 1; display: flex; flex-direction: column; min-width: 0; }

	.dock-header {
		display: flex;
		align-items: center;
		height: 21px;
		padding: 0 3px 0 15px;
	}

	.dock-header h2 { margin: 0; font: inherit; }

	.dock-bar {
		flex: 1;
		height: 4px;
		margin: 2px 7px 0 2px;
		background: #b6b6b6;
	}

	.dock-header button { width: 18px; height: 18px; }

	.dock-header svg {
		display: block;
		margin: auto;
		fill: none;
		stroke: #000;
	}

	.panel { border: 1px solid #828790; }

	.upper { flex: 1; display: flex; min-height: 0; padding-right: 6px; }

	.visibility {
		display: flex;
		flex-direction: column;
		width: 263px;
		padding-right: 6px;
	}

	.vis-body {
		flex: 1;
		display: flex;
		flex-direction: column;
		padding: 19px 6px 13px 8px;
	}

	.vis-line {
		display: flex;
		align-items: center;
		gap: 8px;
		height: 21px;
		margin-bottom: 7px;
	}

	.vis-line > :first-child { width: 101px; white-space: nowrap; }

	.push {
		border: 1px solid #adadad;
		background: #e1e1e1;
	}

	.vis-line .push { width: 39px; height: 21px; }

	.view-select { position: relative; flex: 1; height: 20px; }

	.view-select select {
		appearance: none;
		width: 100%;
		height: 20px;
		border: 1px solid #adadad;
		background: #e1e1e1;
	}

	.view-select::after {
		content: '';
		position: absolute;
		right: 6px;
		top: 8px;
		width: 7px;
		height: 4px;
		background: #000;
		clip-path: polygon(0 0, 100% 0, 50% 100%);
	}

	input[type='checkbox'] {
		appearance: none;
		flex: none;
		width: 13px;
		height: 13px;
		margin: 0;
		border: 1px solid #333;
		background: #fff;
		vertical-align: middle;
	}

	input[type='checkbox']:checked::before {
		content: '';
		display: block;
		width: 11px;
		height: 11px;
		background: #444;
		clip-path: polygon(0 50%, 9% 40%, 36% 66%, 91% 10%, 100% 20%, 36% 84%);
	}

	input[type='checkbox']:disabled { border-color: #ccc; }

	table {
		width: 100%;
		margin-top: 9px;
		border-collapse: collapse;
		table-layout: fixed;
	}

	th, td { padding: 0; height: 20px; text-align: center; }

	th {
		width: 24px;
		height: 18px;
		padding-top: 4px;
		font-weight: 400;
		text-decoration: underline;
		text-underline-offset: 2px;
	}

	th.wide { width: 28px; }
	th.name { width: auto; }
	.name { text-align: left; padding-left: 2px; }
	.name label { display: flex; align-items: center; gap: 4px; }
	.short td { height: 18px; }
	.rule td { height: 6px; }
	.current td { background: #dfdfdf; }

	hr {
		margin: 0 2px;
		border: 0;
		border-top: 1px solid #000;
	}

	.swatch {
		display: inline-block;
		width: 16px;
		height: 16px;
		border: 1px solid #6e6e6e;
		box-shadow: inset 0 0 0 1px #fff;
		vertical-align: middle;
	}

	.green { background: #26ff26; }
	.yellow { background: #ffff00; }
	.red { background: #ff0000; }
	.olive { background: #648c37; }

	.select-mode {
		display: flex;
		align-items: center;
		gap: 5px;
		margin: auto 0 0 38px;
	}

	/* editor */
	.editor { flex: 1; display: flex; flex-direction: column; min-width: 0; padding: 9px 0 6px; }

	.tabs {
		display: flex;
		align-items: flex-end;
		height: 20px;
		padding-left: 2px;
		margin-bottom: -1px;
		position: relative;
	}

	.tabs button {
		height: 18px;
		padding: 0 11px 0 8px;
		border: 1px solid #d9d9d9;
		border-right: 0;
	}

	.tabs .active {
		height: 20px;
		padding: 0 12px;
		background: #fff;
		border: 1px solid #d9d9d9;
		border-bottom: 0;
	}

	.frame {
		flex: 1;
		min-height: 0;
		padding: 1px;
		border: 1px solid #d9d9d9;
		background: #fff;
	}

	.board {
		display: block;
		width: 100%;
		height: 100%;
		background: #000;
		fill: none;
		stroke: #648c37;
		stroke-width: 3;
		shape-rendering: crispEdges;
	}

	.board .thick { stroke-width: 6; }
	.board .dim { stroke: #3b5421; }
	.board .white { stroke: #fff; }
	.board .solid { fill: #648c37; stroke: none; }
	.board .hatch { fill: url(#hatch); stroke: none; }

	/* command and overview */
	.lower { display: flex; gap: 8px; padding: 0 6px 3px 0; }
	.lower .dock-header { height: 22px; }
	.command { flex: 1; padding-left: 2px; }
	.command .dock-header { padding-left: 13px; }
	.console { display: flex; height: 136px; }

	textarea {
		flex: 1;
		padding: 2px 1px 0;
		border: 1px solid #696969;
		background: #fff;
		font: 11px/13px var(--sans);
		resize: none;
		outline: 0;
		overflow: hidden;
	}

	.scroll { display: flex; flex: none; background: #f0f0f0; }
	.scroll.vertical { flex-direction: column; width: 17px; }
	.scroll button { width: 17px; height: 17px; }
	.track { position: relative; flex: 1; }
	.thumb { position: absolute; background: #cdcdcd; }
	.chev { display: block; margin: auto; fill: none; stroke: #555; stroke-width: 2; }
	.chev.down { transform: rotate(180deg); }
	.chev.left { transform: rotate(-90deg); }
	.chev.right { transform: rotate(90deg); }

	.log-thumb { inset: auto 1px 0 1px; height: 21px; }

	.view { width: 252px; }
	.view .dock-header { padding-left: 14px; }

	.overview {
		height: 136px;
		padding: 1px;
		border: 2px solid #e3e3e3;
		border-color: #e3e3e3 #777 #777 #e3e3e3;
		background: #fff;
	}

	.overview svg { display: block; background: #000; }

	/* right side */
	aside { width: 208px; display: flex; flex-direction: column; font: 11px/13px var(--sans); }
	aside .dock-header { font: 10px/12px var(--mono); padding-right: 5px; }
	.options { flex: 1; display: flex; flex-direction: column; }
	.options-body { flex: 1; padding: 36px 20px 0 8px; }
	.options-body p { margin: 0 0 18px; }

	.combo {
		display: flex;
		align-items: center;
		height: 20px;
		padding: 0 4px 0 4px;
		border: 1px solid #adadad;
		background: #e1e1e1;
	}

	.combo select { appearance: none; flex: 1; }
	.combo .chev { margin: 0; stroke-width: 1; }
	.class-combo { margin-left: 28px; }
	.subclass { display: flex; align-items: center; gap: 7px; margin: 15px 0 0 8px; }
	.subclass .swatch { width: 13px; height: 13px; box-shadow: inset 1px 1px 0 1px #999; }
	.top-combo { flex: 1; border-color: #777; background: #fff; }
	.top-combo i { width: 6px; height: 9px; margin-right: 6px; border: 1px solid #000; background: #26ff26; }

	.find { padding: 4px 0 1px; }

	.find-body {
		display: grid;
		grid-template: minmax(0, 1fr) 17px / minmax(0, 1fr) 17px;
		height: 305px;
	}

	.find-scroll { overflow: hidden; padding: 23px 0 0 8px; }

	fieldset {
		min-width: 0;
		height: 320px;
		margin: 0;
		padding: 8px 0 0 6px;
		border: 1px solid #dcdcdc;
		border-right: 0;
	}

	legend { padding: 0 2px; }
	.find-buttons { display: flex; gap: 13px; }
	.find-buttons .push { width: 44px; height: 17px; }
	.find-buttons .push + .push { width: 47px; }

	.find-grid {
		display: grid;
		grid-template-columns: 84px 1fr;
		grid-auto-rows: 24px;
		margin-top: 2px;
	}

	.find-grid label { display: flex; align-items: center; gap: 3px; white-space: nowrap; }
	.disabled { color: #808080; }

	.find .thumb::after {
		content: '';
		position: absolute;
		inset: 0;
		width: 9px;
		height: 10px;
		margin: auto;
		background: #f0f0f0;
	}

	.find-v { inset: 0 1px auto 0; height: 134px; }
	.find-h { inset: 0 auto 1px 0; width: 142px; }

	/* status bar */
	footer {
		display: grid;
		grid-template-columns: 117fr 118fr 118fr 118fr 151fr auto auto auto 118fr 119fr 118fr 119fr 118fr 119fr 18px;
		flex: none;
		height: 27px;
		padding: 2px 0;
	}

	footer > span {
		padding: 0 4px;
		border-right: 1px solid #d2d2d2;
		line-height: 23px;
		white-space: nowrap;
	}

	footer > span:first-child { padding-left: 1px; }
	footer .lit { background: #00ff00 content-box; padding-right: 0; }
	footer .key { padding: 1px 2px 1px 5px; }
	footer .push { display: block; width: 22px; height: 21px; line-height: 19px; overflow: hidden; }
	footer b { font-weight: 400; margin: 0 -4px; }
	.size-grip { align-self: end; justify-self: end; margin-right: 3px; }

	.pointer { position: absolute; left: 130px; top: 76px; fill: none; pointer-events: none; }
</style>
